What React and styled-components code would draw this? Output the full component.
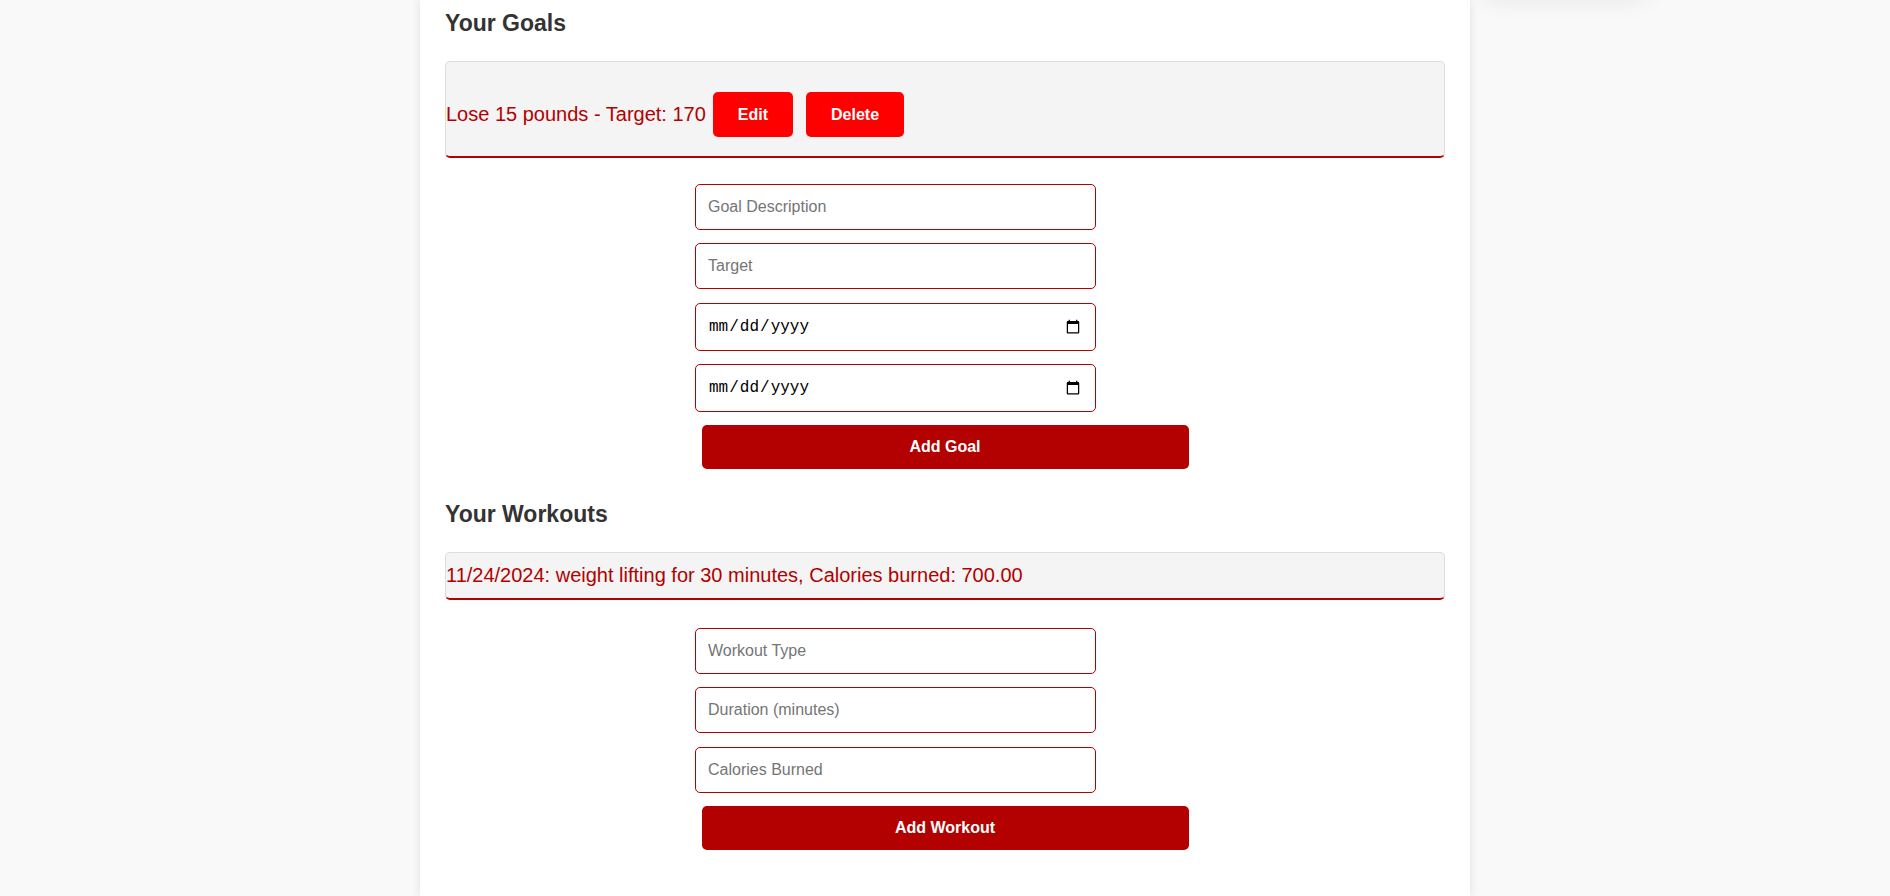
import React from 'react';
import styled, { createGlobalStyle } from 'styled-components';

const GlobalStyle = createGlobalStyle`
    html, body {
        margin: 0;
        padding: 0;
        background: #f9f9f9;
        font-family: 'Liberation Sans', Arial, sans-serif;
        overflow: hidden;
    }
    * {
        box-sizing: border-box;
    }
`;

const Page = styled.div`
    position: relative;
    min-height: 100vh;
`;

// faint shadow of a floating element that sits above the scrolled view
const FloatingGhost = styled.div`
    position: absolute;
    top: -50px;
    left: 1475px;
    width: 180px;
    height: 50px;
    border-radius: 25px;
    background: #f9f9f9;
    box-shadow: 0 4px 22px rgba(0, 0, 0, 0.06);
`;

const Card = styled.main`
    width: 1050px;
    min-height: 100vh;
    margin: 0 auto;
    padding: 10px 25px 40px;
    background: #fff;
    box-shadow: 0 0 10px rgba(0, 0, 0, 0.1);
`;

const Section = styled.section`
    margin-top: ${(props) => (props.first ? '0' : '32px')};
`;

const Heading = styled.h2`
    margin: 0 0 25px;
    font-size: 23px;
    line-height: 26px;
    font-weight: bold;
    color: #333;
`;

const ItemList = styled.ul`
    list-style: none;
    margin: 0 0 ${(props) => props.gapBelow}px;
    padding: 0;
`;

const Item = styled.li`
    display: flex;
    align-items: center;
    padding: ${(props) => props.pad};
    background: #f4f4f4;
    border: 1px solid #ddd;
    border-bottom: 2px solid #b30000;
    border-radius: 5px;
    color: #b30000;
    font-size: 20px;
    line-height: 23px;
`;

const ActionButton = styled.button`
    height: 45px;
    margin-left: ${(props) => props.offset}px;
    padding: 0 25px;
    border: none;
    border-radius: 5px;
    background: #ff0000;
    color: #fff;
    font-family: 'Liberation Sans', Arial, sans-serif;
    font-size: 16px;
    font-weight: bold;
    cursor: pointer;
`;

const Form = styled.form`
    display: flex;
    flex-direction: column;
    align-items: flex-start;
    gap: 13.3px;
    width: 500px;
    margin: 0 auto;
`;

const Field = styled.input`
    width: 401px;
    height: ${(props) => (props.type === 'date' ? '48px' : '46px')};
    padding: 0 12px;
    border: 1px solid #b30000;
    border-radius: 5px;
    background: #fff;
    color: #000;
    font-family: ${(props) =>
        props.type === 'date'
            ? "'Liberation Mono', 'DejaVu Sans Mono', monospace"
            : "'Liberation Sans', Arial, sans-serif"};
    font-size: 16px;
    outline: none;

    &::placeholder {
        color: #757575;
    }
`;

const SubmitButton = styled.button`
    align-self: center;
    width: 487px;
    height: 44px;
    border: none;
    border-radius: 5px;
    background: #b30000;
    color: #fff;
    font-family: 'Liberation Sans', Arial, sans-serif;
    font-size: 16px;
    font-weight: bold;
    cursor: pointer;
`;

const goals = [{ id: 1, text: 'Lose 15 pounds - Target: 170' }];

const workouts = [
    {
        id: 1,
        text: '11/24/2024: weight lifting for 30 minutes, Calories burned: 700.00',
    },
];

const App = () => {
    const stop = (e) => e.preventDefault();

    return (
        <Page>
            <GlobalStyle />
            <FloatingGhost />
            <Card>
                <Section first>
                    <Heading>Your Goals</Heading>
                    <ItemList gapBelow={26}>
                        {goals.map((goal) => (
                            <Item key={goal.id} pad="30px 0 19px">
                                <span>{goal.text}</span>
                                <ActionButton offset={7}>Edit</ActionButton>
                                <ActionButton offset={13}>Delete</ActionButton>
                            </Item>
                        ))}
                    </ItemList>
                    <Form onSubmit={stop}>
                        <Field type="text" placeholder="Goal Description" />
                        <Field type="text" placeholder="Target" />
                        <Field type="date" />
                        <Field type="date" />
                        <SubmitButton type="submit">Add Goal</SubmitButton>
                    </Form>
                </Section>

                <Section>
                    <Heading>Your Workouts</Heading>
                    <ItemList gapBelow={28}>
                        {workouts.map((workout) => (
                            <Item key={workout.id} pad="11px 0">
                                {workout.text}
                            </Item>
                        ))}
                    </ItemList>
                    <Form onSubmit={stop}>
                        <Field type="text" placeholder="Workout Type" />
                        <Field type="text" placeholder="Duration (minutes)" />
                        <Field type="text" placeholder="Calories Burned" />
                        <SubmitButton type="submit">Add Workout</SubmitButton>
                    </Form>
                </Section>
            </Card>
        </Page>
    );
};

export default App;
